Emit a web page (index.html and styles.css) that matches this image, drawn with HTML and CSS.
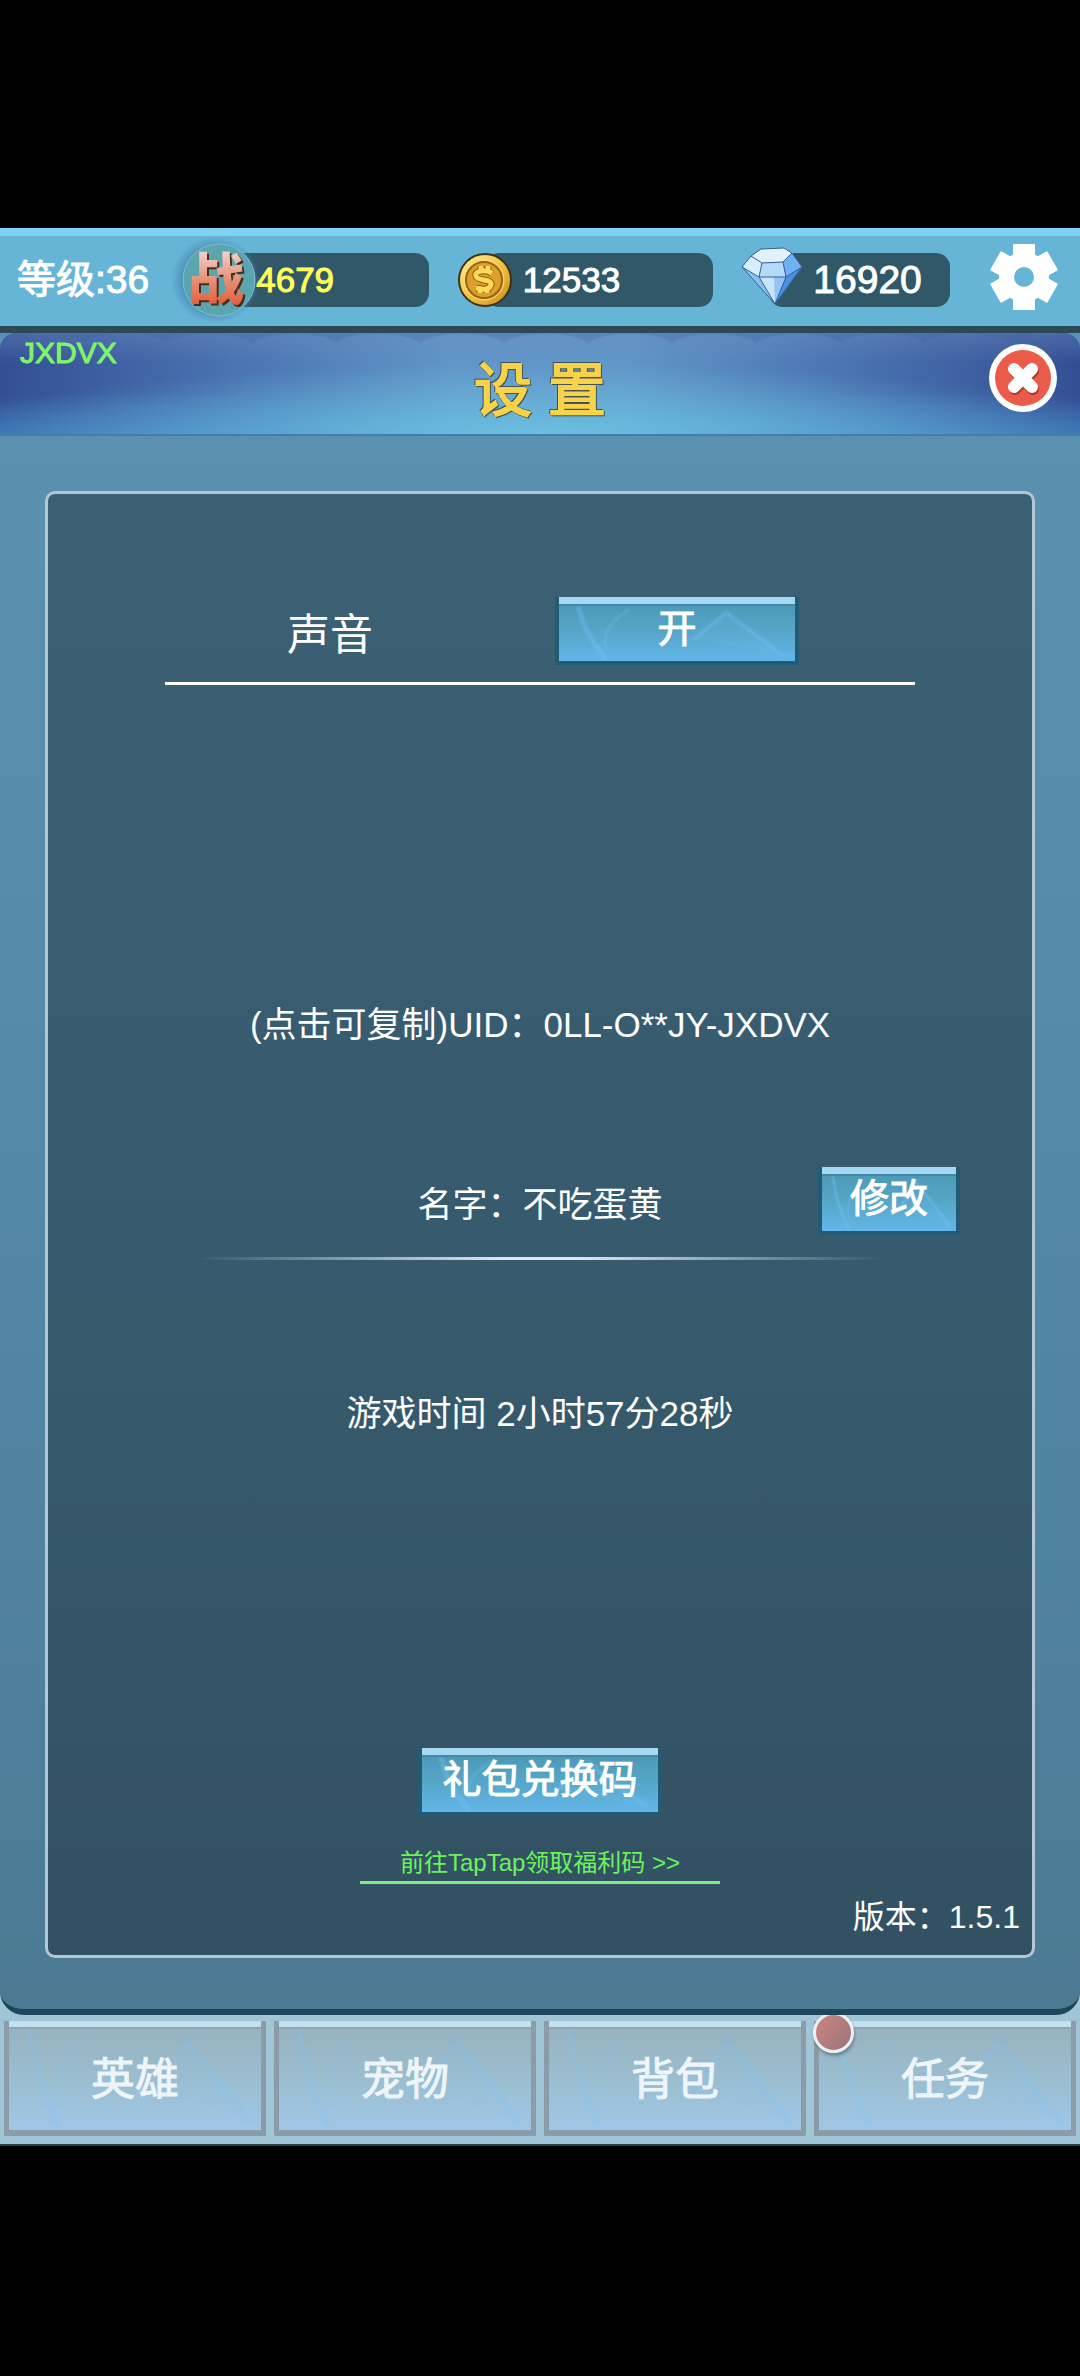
FILE: index.html
```html
<!DOCTYPE html>
<html lang="zh-CN">

<head>
    <meta charset="UTF-8">
    <meta name="viewport" content="width=device-width, initial-scale=1.0">
    <title>设置</title>
    <link rel="stylesheet" href="styles.css">
</head>

<body>
    <!-- shared streak texture for the blue buttons -->
    <svg width="0" height="0" class="defs" aria-hidden="true">
        <symbol id="streaks" viewBox="0 0 240 60" preserveAspectRatio="none">
            <g fill="none" stroke="#7cc4ff" stroke-linecap="round">
                <path d="M20 4 Q26 30 46 56" stroke-width="7" opacity=".2" />
                <path d="M20 4 Q26 30 46 56" stroke-width="3" opacity=".2" />
                <path d="M70 6 Q42 24 48 46" stroke-width="4" opacity=".18" />
                <path d="M138 36 L170 8 L228 54" stroke-width="7" opacity=".15" />
                <path d="M138 36 L170 8 L228 54" stroke-width="3" opacity=".22" />
            </g>
            <path d="M138 36 L170 8 L228 54 Z" fill="#7cc4ff" opacity=".1" />
        </symbol>
    </svg>

    <main class="game">
        <header class="topbar">
            <span class="level">等级:36</span>

            <div class="stat">
                <svg class="power-icon" viewBox="0 0 88 88" role="img" aria-label="战力">
                    <defs>
                        <radialGradient id="glow">
                            <stop offset="0.7" stop-color="#4c8fb5" />
                            <stop offset="1" stop-color="#4c8fc0" stop-opacity="0" />
                        </radialGradient>
                        <linearGradient id="flame" x1="0" y1="0" x2="0" y2="1">
                            <stop offset="0.15" stop-color="#f6dcd8" />
                            <stop offset="0.6" stop-color="#e58a72" />
                            <stop offset="0.95" stop-color="#e0552c" />
                        </linearGradient>
                    </defs>
                    <circle cx="44" cy="44" r="44" fill="url(#glow)" />
                    <circle cx="48" cy="44" r="36" fill="#5ba6ae" stroke="#7fbcd6" />
                    <text x="47" y="65" class="power-glyph shade">战</text>
                    <text x="45" y="63" class="power-glyph" fill="url(#flame)">战</text>
                </svg>
                <span class="power-value">4679</span>
            </div>

            <div class="stat">
                <svg class="coin-icon" viewBox="0 0 56 56" role="img" aria-label="金币">
                    <defs>
                        <linearGradient id="gold" x1="0" y1="0" x2="1" y2="1">
                            <stop offset="0" stop-color="#fff0a0" />
                            <stop offset="0.5" stop-color="#f3c23f" />
                            <stop offset="1" stop-color="#c98b1c" />
                        </linearGradient>
                    </defs>
                    <circle cx="28" cy="28" r="26" fill="url(#gold)" stroke="#3d3215" stroke-width="2" />
                    <circle cx="27" cy="28" r="18" fill="#dda02f" stroke="#9a6412" stroke-width="2" />
                    <circle cx="27" cy="28" r="20" fill="none" stroke="#ffe27a" stroke-width="1" />
                    <path d="M35 21 Q30 18 24 19 Q18 20 19 24 Q20 27 27 28 Q35 29 34 33 Q32 38 25 37 L19 36 M24 14 V19 M31 14 V19 M23 37 V41 M30 37 V41" fill="none" stroke="#8c5a10" stroke-width="7" />
                    <path d="M35 21 Q30 18 24 19 Q18 20 19 24 Q20 27 27 28 Q35 29 34 33 Q32 38 25 37 L19 36 M24 14 V19 M31 14 V19 M23 37 V41 M30 37 V41" fill="none" stroke="#ffd95a" stroke-width="5" />
                </svg>
                <span>12533</span>
            </div>

            <div class="stat small">
                <svg class="gem-icon" viewBox="0 0 62 58" role="img" aria-label="钻石">
                    <path d="M20 2 L43 1 L51 6 L61 20 L34 57 L1 20 L10 9 Z" fill="#8fbff2" />
                    <path d="M20 2 L43 1 L51 6 L42 15 L21 16 L10 9 Z" fill="#e3f1fc" />
                    <path d="M10 9 L21 16 L18 30 L1 20 Z" fill="#d8effb" />
                    <path d="M21 16 L42 15 L45 30 L18 30 Z" fill="#b5daf5" />
                    <path d="M42 15 L51 6 L61 20 L45 30 Z" fill="#6fb0f2" />
                    <path d="M1 20 L18 30 L34 57 Z" fill="#8dc0ee" />
                    <path d="M18 30 L45 30 L34 57 Z" fill="#c9e5fb" />
                    <path d="M33 30 L45 30 L34 57 Z" fill="#93c3f3" />
                    <path d="M45 30 L61 20 L34 57 Z" fill="#4a90e0" />
                    <path d="M20 2 L43 1 L51 6 L61 20 L34 57 L1 20 L10 9 Z M10 9 L21 16 L42 15 L51 6 M21 16 L18 30 L45 30 L42 15 M1 20 L18 30 L34 57 L45 30 L61 20" fill="none" stroke="#2f5f9c" stroke-width="1" stroke-linejoin="round" />
                </svg>
                <span class="gem-value">16920</span>
            </div>

            <button type="button" class="icon-button gear" aria-label="设置">
                <svg viewBox="0 0 68 68">
                    <g fill="#fff">
                        <circle cx="34" cy="34" r="25" />
                        <rect x="23" y="1" width="22" height="66" rx="1" />
                        <rect x="23" y="1" width="22" height="66" rx="1" transform="rotate(60 34 34)" />
                        <rect x="23" y="1" width="22" height="66" rx="1" transform="rotate(120 34 34)" />
                    </g>
                    <circle cx="34" cy="34" r="10" fill="#67b5d6" />
                </svg>
            </button>
        </header>

        <section class="panel">
            <div class="panel-header">
                <span class="user-code">JXDVX</span>
                <h1>设 置</h1>
                <button type="button" class="icon-button close" aria-label="关闭">
                    <svg viewBox="0 0 68 68">
                        <circle cx="34" cy="34" r="34" fill="#fff" />
                        <circle cx="34" cy="34" r="28" fill="#eb5b49" />
                        <path d="M26 27 L44 45 M44 27 L26 45" stroke="#a8392f" stroke-width="12" stroke-linecap="round" />
                        <path d="M25 25 L43 43 M43 25 L25 43" stroke="#fff" stroke-width="12" stroke-linecap="round" />
                    </svg>
                </button>
            </div>

            <div class="settings">
                <div class="sound-row">
                    <span class="sound-label" id="sound-label">声音</span>
                    <button type="button" id="sound" class="btn wide" aria-labelledby="sound-label sound">
                        <svg class="streaks"><use href="#streaks" /></svg>
                        <span>开</span>
                    </button>
                </div>

                <button type="button" class="uid">(点击可复制)UID：0LL-O**JY-JXDVX</button>

                <div class="name-row">
                    <span class="name">名字：不吃蛋黄</span>
                    <button type="button" class="btn edit">
                        <svg class="streaks"><use href="#streaks" /></svg>
                        <span>修改</span>
                    </button>
                </div>
                <div class="divider"></div>

                <p class="play-time">游戏时间 2小时57分28秒</p>

                <button type="button" class="btn wide gift">
                    <svg class="streaks"><use href="#streaks" /></svg>
                    <span>礼包兑换码</span>
                </button>
                <a href="#" class="taptap">前往TapTap领取福利码 &gt;&gt;</a>

                <p class="version">版本：1.5.1</p>
            </div>
        </section>

        <nav class="tabs">
            <button type="button" class="tab">
                <svg class="streaks"><use href="#streaks" /></svg>
                <span>英雄</span>
            </button>
            <button type="button" class="tab">
                <svg class="streaks"><use href="#streaks" /></svg>
                <span>宠物</span>
            </button>
            <button type="button" class="tab">
                <svg class="streaks"><use href="#streaks" /></svg>
                <span>背包</span>
            </button>
            <button type="button" class="tab">
                <svg class="streaks"><use href="#streaks" /></svg>
                <span>任务</span>
                <i class="badge"></i>
            </button>
        </nav>
    </main>
</body>

</html>
```
FILE: styles.css
```css
* {
    box-sizing: border-box;
}

body {
    margin: 0;
    padding-bottom: 2px;
    min-height: 100vh;
    display: flex;
    flex-direction: column;
    justify-content: center;
    background-color: #000;
    color: #fff;
    font-family: "Liberation Sans", "Noto Sans CJK SC", sans-serif;
    font-size: 35px;
}

button {
    font: inherit;
    color: inherit;
    border: none;
    padding: 0;
    background: none;
    cursor: pointer;
}

p,
h1 {
    margin: 0;
    font-weight: normal;
}

.defs {
    position: absolute;
}

.game {
    background-color: #a0c5d6;
    border-bottom: 2px solid #24424f;
}

/* top bar */
.topbar {
    display: flex;
    align-items: center;
    padding: 17px 22px 19px 17px;
    background-color: #67b5d6;
    border-top: 8px solid #7dd2f5;
    border-bottom: 7px solid #2d4856;
}

.level {
    font-size: 39px;
    line-height: 54px;
    white-space: nowrap;
    margin-right: 51px;
    -webkit-text-stroke: 1px #fff;
}

.stat {
    flex: 229 1 0;
    display: flex;
    align-items: center;
    height: 54px;
    margin-right: 56px;
    background-color: #305868;
    border-radius: 14px;
    -webkit-text-stroke: 1px #fff;
}

.stat.small {
    flex-grow: 181;
    margin-right: 40px;
}

.power-icon {
    flex: none;
    width: 88px;
    height: 88px;
    margin: 0 -3px 0 -29px;
    overflow: visible;
}

.power-glyph {
    font-family: "Noto Sans CJK SC", sans-serif;
    font-size: 56px;
    font-weight: 900;
    text-anchor: middle;
    -webkit-text-stroke: 0;
}

.power-glyph.shade {
    fill: #4b2c1c;
}

.power-value {
    color: #ffff5c;
    -webkit-text-stroke: 1px #ffff5c;
}

.coin-icon {
    flex: none;
    width: 56px;
    height: 56px;
    margin: 0 10px 0 -28px;
}

.gem-icon {
    flex: none;
    width: 62px;
    height: 58px;
    margin: 0 10px 8px -28px;
}

.gem-value {
    font-size: 39px;
}

.icon-button {
    flex: none;
    width: 68px;
    height: 68px;
}

.icon-button svg {
    display: block;
}

.gear {
    margin: -12px 0 -6px;
}

/* settings panel */
.panel {
    position: relative;
    z-index: 1;
    padding-bottom: 51px;
    background: linear-gradient(#5c92b1, #5488a9 50%, #4c7a93);
    border-bottom: 6px solid #1d475b;
    border-radius: 0 0 24px 24px;
}

.panel-header {
    display: grid;
    grid-template-columns: 1fr auto 1fr;
    align-items: start;
    height: 103px;
    padding: 0 20px;
    border-radius: 16px 16px 0 0;
    border-bottom: 2px solid #3f7fae;
    background:
        radial-gradient(ellipse 46px 14px at 50% 14px, rgba(60, 95, 155, 0) 90%, rgba(60, 95, 155, 0.25)) 0 0 / 84px 12px repeat-x,
        radial-gradient(ellipse 55% 70% at 50% 100%, rgba(115, 205, 230, 0.75), rgba(90, 170, 220, 0)),
        linear-gradient(rgba(110, 140, 190, 0.4), rgba(50, 80, 150, 0) 30%, rgba(50, 80, 150, 0) 60%, rgba(70, 150, 210, 0.5)),
        linear-gradient(90deg, #334f94, #4a74b2 22%, #6096c8 42%, #6096c8 58%, #4a74b2 78%, #334f94);
}

.user-code {
    font-size: 30px;
    line-height: 40px;
    color: #7df566;
    -webkit-text-stroke: 1px #7df566;
}

.panel-header h1 {
    font-size: 58px;
    line-height: 60px;
    margin-top: 28px;
    color: #f7d34a;
    -webkit-text-stroke: 2px #f7d34a;
    filter: drop-shadow(1px 1px 0 #44525a) drop-shadow(-1px -1px 0 #44525a);
}

.close {
    justify-self: end;
    margin: 11px 3px 0 0;
}

.settings {
    display: flex;
    flex-direction: column;
    align-items: center;
    margin: 55px 45px 0;
    padding: 103px 0 18px;
    line-height: 48px;
    background: linear-gradient(#3c6074, #375b6e 50%, #325163);
    border: 3px solid #b3c6d3;
    border-radius: 10px;
}

/* blue buttons */
.btn,
.tab {
    position: relative;
    display: flex;
    align-items: center;
    justify-content: center;
    white-space: nowrap;
}

.btn {
    width: 142px;
    height: 68px;
    font-size: 39px;
    line-height: 56px;
    background: linear-gradient(#4a96b2, #55a5c6 50%, #63b6e8);
    border: solid #245b74;
    border-width: 0 4px 4px;
    box-shadow: inset 0 7px 0 #a6d8f2, inset 0 9px 0 #4388a6;
    -webkit-text-stroke: 1px #fff;
}

.btn.wide {
    width: 244px;
}

.btn span,
.tab span {
    position: relative;
}

.streaks {
    position: absolute;
    top: 8px;
    left: 0;
    width: 100%;
    height: calc(100% - 8px);
}

.sound-row {
    display: grid;
    grid-template-columns: 330px 1fr;
    align-items: end;
    justify-items: center;
    width: 750px;
    max-width: 100%;
    padding-bottom: 17px;
    border-bottom: 3px solid #fff;
}

.sound-label {
    font-size: 43px;
    line-height: 60px;
}

.sound-row .btn {
    justify-self: start;
    margin-left: 60px;
}

.uid {
    margin-top: 316px;
}

.name-row {
    display: grid;
    grid-template-columns: 1fr auto 1fr;
    align-items: end;
    width: 100%;
    margin-top: 118px;
}

.name {
    grid-column: 2;
    line-height: 60px;
}

.edit {
    justify-self: end;
    margin-right: 72px;
}

.divider {
    width: 680px;
    max-width: 100%;
    height: 3px;
    margin-top: 22px;
    background: linear-gradient(90deg, rgba(220, 230, 235, 0), #dfe9ee 45%, #dfe9ee 55%, rgba(220, 230, 235, 0));
}

.play-time {
    margin-top: 130px;
}

.gift {
    margin-top: 310px;
}

.taptap {
    width: 360px;
    margin-top: 28px;
    border-bottom: 3px solid #7df27a;
    color: #6df25a;
    font-size: 24px;
    line-height: 37px;
    text-align: center;
    text-decoration: none;
}

.version {
    align-self: flex-end;
    margin: 13px 12px 0 0;
    font-size: 32px;
    line-height: 40px;
}

/* bottom tabs */
.tabs {
    display: grid;
    grid-template-columns: repeat(4, 1fr);
    gap: 8px;
    padding: 6px 4px 8px;
}

.tab {
    height: 115px;
    font-size: 44px;
    color: #eef4f8;
    background: linear-gradient(#97b1bd, #9bbfd2 60%, #9fc6e8);
    border: solid #8b9ca8;
    border-width: 0 5px 6px;
    box-shadow: inset 0 6px 0 #c4dff0, inset 0 8px 0 #8fa7b3;
    -webkit-text-stroke: 1px #eef4f8;
}

.tab .streaks {
    opacity: 0.6;
}

.badge {
    position: absolute;
    top: -9px;
    left: -6px;
    width: 41px;
    height: 41px;
    border: 3px solid #eceff2;
    border-radius: 50%;
    background: linear-gradient(135deg, #cf8580, #97757b);
    box-shadow: 1px 3px 3px rgba(70, 90, 105, 0.5);
}
```
